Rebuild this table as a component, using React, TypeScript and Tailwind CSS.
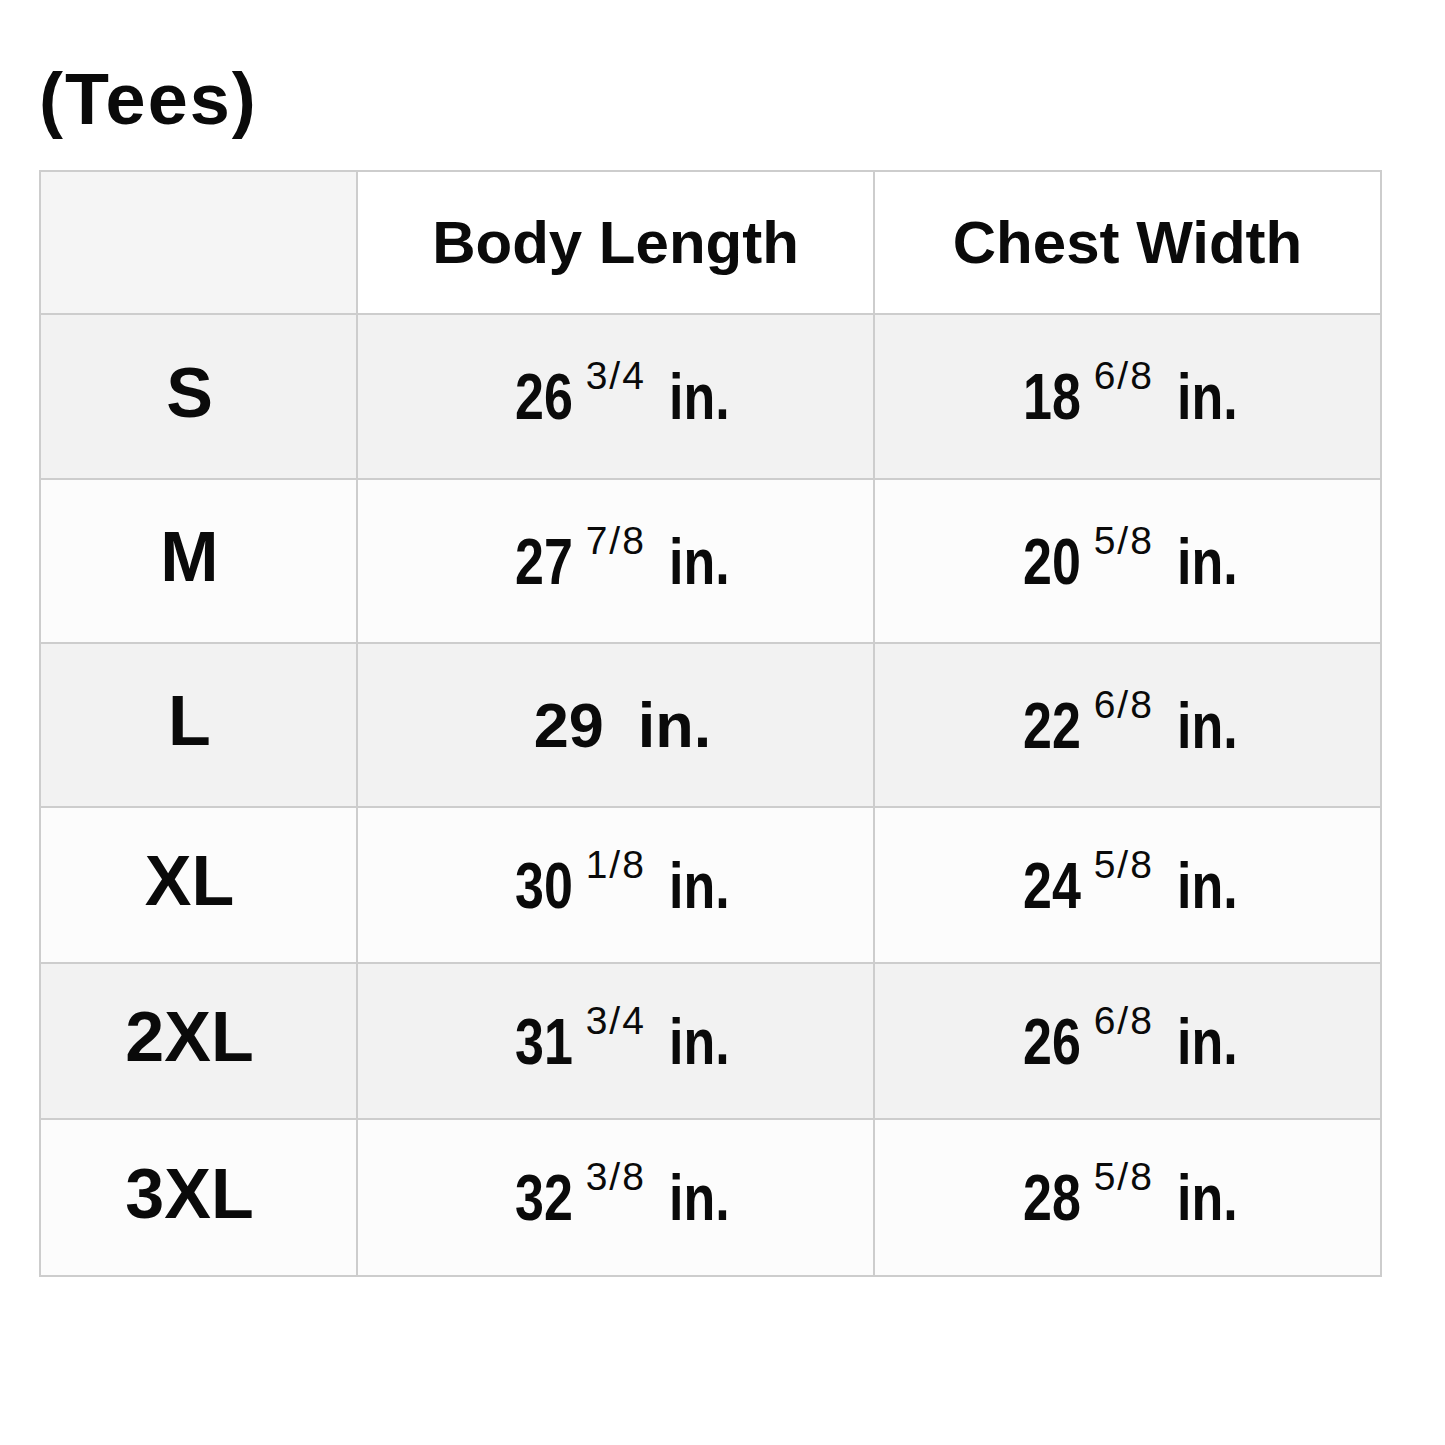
import React from 'react';

type Measure = { whole: string; frac?: string };

type Row = {
  size: string;
  body: Measure;
  chest: Measure;
  shaded: boolean;
  height: string;
};

const rows: Row[] = [
  { size: 'S', body: { whole: '26', frac: '3/4' }, chest: { whole: '18', frac: '6/8' }, shaded: true, height: 'h-[165px]' },
  { size: 'M', body: { whole: '27', frac: '7/8' }, chest: { whole: '20', frac: '5/8' }, shaded: false, height: 'h-[164px]' },
  { size: 'L', body: { whole: '29' }, chest: { whole: '22', frac: '6/8' }, shaded: true, height: 'h-[164px]' },
  { size: 'XL', body: { whole: '30', frac: '1/8' }, chest: { whole: '24', frac: '5/8' }, shaded: false, height: 'h-[156px]' },
  { size: '2XL', body: { whole: '31', frac: '3/4' }, chest: { whole: '26', frac: '6/8' }, shaded: true, height: 'h-[156px]' },
  { size: '3XL', body: { whole: '32', frac: '3/8' }, chest: { whole: '28', frac: '5/8' }, shaded: false, height: 'h-[157px]' },
];

// no narrow face installed, so squeeze the bold one
const squeeze = 'inline-block origin-left scale-x-[0.8] font-bold';

const Value: React.FC<{ m: Measure }> = ({ m }) => {
  // whole inches without a fraction are set bold and regular width
  if (!m.frac) {
    return (
      <span className="text-[63px] font-bold leading-none">
        {m.whole}
        <span className="ml-[34px]">in.</span>
      </span>
    );
  }
  return (
    <span className="inline-flex items-baseline text-[65px] leading-none">
      <span className={`${squeeze} mr-[-14px]`}>{m.whole}</span>
      <sup className="ml-[12px] top-[-30px] text-[39px] leading-none tracking-[2px]">{m.frac}</sup>
      <span className={`${squeeze} ml-[23px] mr-[-15px]`}>in.</span>
    </span>
  );
};

const cellBase = 'flex items-center justify-center border-r-2 border-b-2 border-[#cdcdcd]';

export default function App() {
  return (
    <div className="min-h-[1445px] w-[1445px] bg-white text-[#0a0a0a] font-['Liberation_Sans',Arial,sans-serif]">
      <div className="pt-[63px] pl-[39px]">
        <h1 className="text-[72px] font-bold leading-none tracking-[2px]">(Tees)</h1>

        <div className="mt-[35px] w-[1343px] border-l-2 border-t-2 border-[#cdcdcd]">
          {/* header */}
          <div className="grid h-[143px] grid-cols-[317px_517px_507px]">
            <div className={`${cellBase} bg-[#f5f5f5]`} />
            <div className={`${cellBase} bg-white`}>
              <span className="text-[60px] font-bold leading-none">Body Length</span>
            </div>
            <div className={`${cellBase} bg-white`}>
              <span className="text-[60px] font-bold leading-none">Chest Width</span>
            </div>
          </div>

          {rows.map((r) => (
            <div
              key={r.size}
              className={`grid grid-cols-[317px_517px_507px] ${r.height} ${r.shaded ? 'bg-[#f2f2f2]' : 'bg-[#fcfcfc]'}`}
            >
              <div className={cellBase}>
                <span className="pr-[18px] pb-[8px] text-[70px] font-bold leading-none">{r.size}</span>
              </div>
              <div className={cellBase}>
                <span className="pl-[14px]">
                  <Value m={r.body} />
                </span>
              </div>
              <div className={cellBase}>
                <span className="pl-[6px]">
                  <Value m={r.chest} />
                </span>
              </div>
            </div>
          ))}
        </div>
      </div>
    </div>
  );
}
